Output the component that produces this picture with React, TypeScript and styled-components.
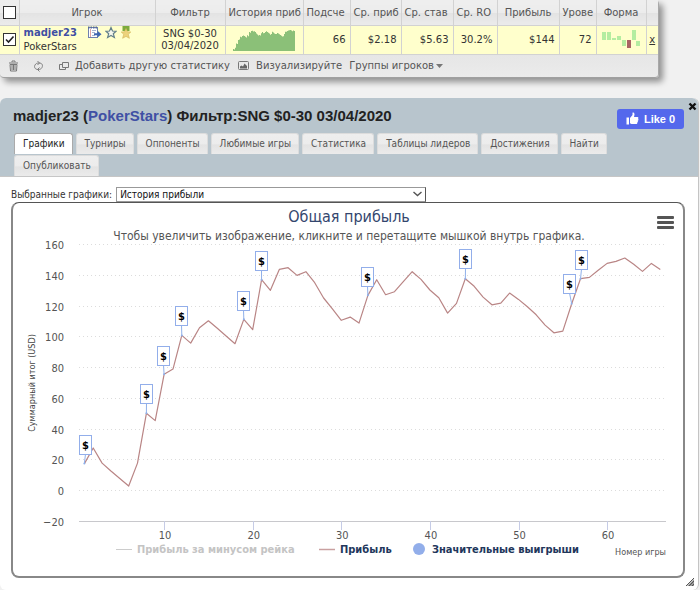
import React from "react";
import styled, { createGlobalStyle, css } from "styled-components";

const GlobalStyle = createGlobalStyle`
  * { box-sizing: border-box; }
  body {
    margin: 0;
    background: #f1f1f1;
    color: #333;
    font-family: "DejaVu Sans", Verdana, sans-serif;
    font-size: 10px;
    overflow: hidden;
  }
`;

const silver = "linear-gradient(#eeeeee 0%, #ececec 50%, #e3e3e3 54%, #ebebeb 100%)";

const Page = styled.div`
  display: flex;
  flex-direction: column;
  gap: 20px;
  min-height: 100vh;
`;

/* Results grid */

const Results = styled.section`
  margin-right: 41px;
  background: ${silver};
  border-right: 1px solid #a8a8a8;
  border-bottom: 1px solid #a0a0a0;
  border-radius: 4px;
  box-shadow: 4px 4px 6px rgba(0, 0, 0, 0.4);
`;

const Grid = styled.table`
  width: 100%;
  table-layout: fixed;
  border-collapse: collapse;
`;

const Col = styled.col<{ $w?: number }>`
  width: ${(p) => (p.$w ? `${p.$w}px` : "auto")};
`;

const HeadCell = styled.th<{ $left?: boolean }>`
  height: 25px;
  padding: 0 0 0 ${(p) => (p.$left ? 3 : 0)}px;
  white-space: nowrap;
  font-weight: normal;
  text-align: ${(p) => (p.$left ? "left" : "center")};
  color: #555;
  background: ${silver};
  border-right: 1px solid #d2d2d2;
  border-bottom: 1px solid #d2d2d2;
  &:last-child { border-right: 0; }
`;

const Cell = styled.td<{ $align?: string; $tight?: boolean }>`
  height: 29px;
  padding: 0 ${(p) => (p.$tight ? 0 : 4)}px;
  white-space: nowrap;
  line-height: 12px;
  text-align: ${(p) => p.$align || "right"};
  background: #ffffcc;
  border-right: 1px solid #d2d2d2;
  border-bottom: 1px solid #d2d2d2;
  &:last-child { border-right: 0; }
`;

const Tick = styled.input`
  appearance: none;
  display: block;
  width: 13px;
  height: 13px;
  margin: 0 auto;
  background: #fff;
  border: 1px solid #333;
`;

const TickBox = styled.label`
  display: grid;
  justify-content: center;
  & > * { grid-area: 1 / 1; }
  & svg { pointer-events: none; visibility: hidden; }
  & input:checked + svg { visibility: visible; }
`;

const PlayerRow = styled.div`
  display: flex;
  align-items: center;
  gap: 10px;
  height: 14px;
`;

const Icons = styled.span`
  display: flex;
  align-items: center;
  gap: 3px;
`;

const Site = styled.div`
  line-height: 14px;
`;

const Link = styled.a<{ $bold?: boolean }>`
  color: #3f50a4;
  text-decoration: none;
  font-weight: ${(p) => (p.$bold ? "bold" : "inherit")};
`;

const RemoveLink = styled.a`
  color: #333;
`;

const Spark = styled.svg`
  display: block;
  margin: 0 auto;
`;

const Toolbar = styled.div`
  display: flex;
  align-items: center;
  height: 22px;
  padding-left: 8px;
`;

const ToolButton = styled.button<{ $after?: number; $gap?: number }>`
  display: flex;
  align-items: center;
  gap: ${(p) => p.$gap || 6}px;
  padding: 0;
  margin-right: ${(p) => p.$after || 0}px;
  border: 0;
  background: none;
  font: inherit;
  color: #555;
  white-space: nowrap;
  cursor: pointer;
`;

/* Player dialog */

const Dialog = styled.section`
  flex: 1;
  display: flex;
  flex-direction: column;
  margin-right: 1px;
  background: #fff;
  border-right: 1px solid #c4c4c4;
  border-radius: 6px;
  position: relative;
`;

const DialogHead = styled.header`
  background: #b8c5cd;
  border-bottom: 1px solid #c6c6c6;
  border-radius: 6px 6px 0 0;
  display: grid;
  grid-template-columns: 1fr auto;
  padding: 0 1px 0 13px;
`;

const Title = styled.h1`
  margin: 0;
  color: #222;
  font: bold 15px/35px "Liberation Sans", Arial, sans-serif;
`;

const HeadActions = styled.div`
  display: flex;
  align-items: flex-start;
  gap: 4px;
`;

const LikeButton = styled.button`
  display: flex;
  align-items: center;
  justify-content: center;
  gap: 5px;
  width: 67px;
  height: 20px;
  margin-top: 11px;
  padding: 0;
  border: 0;
  border-radius: 3px;
  background: #5468ec;
  color: #fff;
  font: bold 11px "Liberation Sans", Arial, sans-serif;
  cursor: pointer;
`;

const CloseButton = styled.button`
  display: flex;
  width: 9px;
  height: 9px;
  margin-top: 4px;
  padding: 0;
  border: 0;
  background: none;
  cursor: pointer;
`;

const Tabs = styled.nav`
  grid-column: 1 / -1;
  display: flex;
  flex-wrap: wrap;
  gap: 1px 3px;
  padding: 0 40px 0 1px;
`;

const Tab = styled.button<{ $active?: boolean }>`
  height: 21px;
  padding: 0 7px 0 8px;
  border: 1px solid #dcdcdc;
  border-bottom: 0;
  border-radius: 3px 3px 0 0;
  background: ${silver};
  color: #555;
  font: 10px "DejaVu Sans Condensed", "DejaVu Sans", Tahoma, sans-serif;
  cursor: pointer;
  ${(p) =>
    p.$active &&
    css`
      background: #fff;
      border-color: #aaa;
      color: #222;
    `}
`;

const Body = styled.div`
  padding: 10px 13px 11px 11px;
`;

const Picker = styled.div`
  display: flex;
  align-items: center;
  gap: 4px;
  height: 15px;
  font-family: "DejaVu Sans Condensed", "DejaVu Sans", Tahoma, sans-serif;
`;

const SelectWrap = styled.span`
  display: grid;
  width: 46%;
  align-items: center;
  & > * { grid-area: 1 / 1; }
  & svg { justify-self: end; margin-right: 4px; pointer-events: none; }
`;

const Select = styled.select`
  appearance: none;
  width: 100%;
  height: 15px;
  padding: 0 3px;
  border: 1px solid #999;
  border-right-color: #555;
  border-radius: 0;
  background: #fff;
  color: #111;
  font: inherit;
`;

const ChartPanel = styled.div`
  border: 1px solid #555;
  border-width: 1px 2px 2px;
  border-color: #555 #888 #888;
  border-radius: 8px;
  background: #fff;
`;

const ChartSvg = styled.svg`
  display: block;
  width: 100%;
  height: auto;
  font-family: "DejaVu Sans Condensed", "DejaVu Sans", "Lucida Grande", sans-serif;
`;

const Grip = styled.svg`
  position: absolute;
  right: 4px;
  bottom: 4px;
`;

/* Chart data: running profit in USD after each game */

const profit = [
  17.3, 27.4, 17.6, 12.5, 7.6, 2.7, 17.6, 50, 45.2, 75.3, 78.7, 100.6, 95.6, 105.6, 110.1, 105.2, 100.2, 95.2, 111,
  104.3, 136.8, 129.9, 143.5, 144.6, 139.6, 142, 134.8, 124.9, 117.9, 110.4, 112.5, 108.6, 126.6, 136.8, 127, 129,
  135.5, 142, 137, 130.1, 125.1, 115.1, 121.4, 137.4, 132.5, 125.5, 120.5, 121.6, 128.1, 124, 119.2, 114, 107.3,
  102.3, 103.4, 121.2, 137.4, 138.3, 142.9, 147.4, 148.7, 150.9, 146.8, 142.2, 147.4, 143.5,
];

const wins = [
  { game: 1, left: 66, top: 232 },
  { game: 8, left: 127, top: 181 },
  { game: 10, left: 144, top: 143 },
  { game: 12, left: 162, top: 103 },
  { game: 19, left: 224, top: 88 },
  { game: 21, left: 242, top: 48 },
  { game: 33, left: 348, top: 64 },
  { game: 44, left: 446, top: 46 },
  { game: 56, left: 550, top: 71 },
  { game: 57, left: 562, top: 47 },
];

const gx = (game: number) => 62.5 + game * 8.86;
const gy = (usd: number) => 287.2 - usd * 1.539;

function ProfitChart() {
  const line = profit.map((v, i) => `${gx(i + 1).toFixed(1)},${gy(v).toFixed(1)}`).join(" ");
  const ticks = [160, 140, 120, 100, 80, 60, 40, 20, 0, -20];
  return (
    <ChartSvg viewBox="0 0 670 373" role="img" aria-label="Общая прибыль">
      <text x="336" y="19" textAnchor="middle" fontSize="16" fill="#33466e">Общая прибыль</text>
      <text x="336" y="37" textAnchor="middle" fontSize="12" fill="#555">
        Чтобы увеличить изображение, кликните и перетащите мышкой внутрь графика.
      </text>
      {[13, 18, 23].map((y) => (
        <rect key={y} x="644" y={y} width="17" height="3" rx="1" fill="#555" />
      ))}
      {ticks.map((t) => {
        const y = Math.round(gy(t)) + 0.5;
        const base = t === -20;
        return (
          <g key={t}>
            <text x="51" y={y + 4} textAnchor="end" fontSize="11" fill="#555">{t < 0 ? `−${-t}` : t}</text>
            <line x1="66" x2="653" y1={y} y2={y} stroke={base ? "#c8c8cc" : "#dcdcdc"} strokeDasharray={base ? undefined : "1 3"} />
          </g>
        );
      })}
      {[10, 20, 30, 40, 50, 60].map((g) => (
        <g key={g}>
          <line x1={Math.round(gx(g)) + 0.5} x2={Math.round(gx(g)) + 0.5} y1="318" y2="327" stroke="#c6cce6" />
          <text x={gx(g) + 1} y="336" textAnchor="middle" fontSize="11" fill="#555">{g}</text>
        </g>
      ))}
      <text transform="translate(22 180) rotate(-90)" textAnchor="middle" fontSize="9" fill="#444">Суммарный итог (USD)</text>
      <polyline points={line} fill="none" stroke="#b98585" strokeWidth="1.2" strokeLinejoin="round" />
      {wins.map((w) => (
        <g key={w.game}>
          <line x1={w.left + 6.5} y1={w.top + 19} x2={gx(w.game)} y2={gy(profit[w.game - 1])} stroke="#8fb0ea" />
          <circle cx={gx(w.game)} cy={gy(profit[w.game - 1])} r="1" fill="#8fb0ea" />
          <rect x={w.left + 0.5} y={w.top + 0.5} width="12" height="19" fill="#fff" stroke="#92aeea" />
          <text x={w.left + 6.5} y={w.top + 14} textAnchor="middle" fontSize="11" fontWeight="bold" fill="#000">$</text>
        </g>
      ))}
      <g fontSize="11" fontWeight="bold">
        <line x1="103" x2="119" y1="346.5" y2="346.5" stroke="#ccc" />
        <text x="124" y="350" fill="#c4c4c4">Прибыль за минусом рейка</text>
        <line x1="306" x2="322" y1="346.5" y2="346.5" stroke="#c9a0a0" strokeWidth="1.5" />
        <text x="327" y="350" fill="#22375c">Прибыль</text>
        <circle cx="406" cy="346" r="6" fill="#92aeea" />
        <text x="419" y="350" fill="#22375c">Значительные выигрыши</text>
      </g>
      <text x="653" y="352" textAnchor="end" fontSize="9" fill="#555">Номер игры</text>
    </ChartSvg>
  );
}

const steps = profit.slice(4).map((v, i) => `L${i},${(22 - (v * 20) / 151).toFixed(1)}H${i + 1}`).join("");

function HistorySpark() {
  return (
    <Spark width="62" height="23" aria-label="История прибыли">
      <path d={`M0,23V19${steps}V23Z`} fill="#8bc078" />
    </Spark>
  );
}

const form = [
  [0, 2, 8], [5, 2, 8], [10, 8, 2], [15, 6, 4], [20, 10, 6], [25, 10, 8], [30, 0, 10], [34, 11, 5],
];

function FormSpark() {
  return (
    <Spark width="38" height="19" aria-label="Форма">
      {form.map(([x, y, h]) => (
        <rect key={x} x={x} y={y} width="4" height={h} fill={x === 25 ? "#a86464" : "#b4eda0"} />
      ))}
    </Spark>
  );
}

const columns: [string, boolean?][] = [
  ["Игрок"], ["Фильтр"], ["История приб", true], ["Подсче", true], ["Ср. приб", true], ["Ср. став", true],
  ["Ср. RO", true], ["Прибыль"], ["Урове", true], ["Форма"], [""],
];

const tabs = [
  "Графики", "Турниры", "Оппоненты", "Любимые игры", "Статистика", "Таблицы лидеров", "Достижения", "Найти",
  "Опубликовать",
];

export default function App() {
  return (
    <>
      <GlobalStyle />
      <Page>
        <Results>
          <Grid>
            <colgroup>
              <Col $w={19} /><Col /><Col $w={70} /><Col $w={78} /><Col $w={47} /><Col $w={51} />
              <Col $w={52} /><Col $w={44} /><Col $w={62} /><Col $w={37} /><Col $w={50} /><Col $w={12} />
            </colgroup>
            <thead>
              <tr>
                <HeadCell><Tick type="checkbox" aria-label="Выбрать все" /></HeadCell>
                {columns.map(([name, left]) => (
                  <HeadCell key={name} $left={left}>{name}</HeadCell>
                ))}
              </tr>
            </thead>
            <tbody>
              <tr>
                <Cell $tight>
                  <TickBox>
                    <Tick type="checkbox" defaultChecked aria-label="madjer23" />
                    <svg width="13" height="13"><path d="M3 6.5 5.5 9 10.5 3.5" fill="none" stroke="#222" strokeWidth="1.6" /></svg>
                  </TickBox>
                </Cell>
                <Cell $align="left">
                  <PlayerRow>
                    <Link href="#player" $bold>madjer23</Link>
                    <Icons>
                      <svg width="15" height="13">
                        <rect x="1.5" y="1.5" width="9" height="10" fill="#fff" stroke="#7081ae" />
                        <path d="M1 1.5H11" stroke="#566a9b" strokeWidth="2" strokeDasharray="1.5 1" />
                        <path d="M3.5 3V11" stroke="#e2a3a3" />
                        <path d="M5 4.5H9M5 6.5H8M5 9.5H8" stroke="#a9b4d1" />
                        <path d="M7 7.2H10.5V4.8L14.5 8.2 10.5 11.6V9.3H7Z" fill="#3f65b0" />
                      </svg>
                      <svg width="12" height="13">
                        <path d="M6 1.5 7.5 5 11 5.3 8.3 7.7 9.4 11.5 6 9.5 2.6 11.5 3.7 7.7 1 5.3 4.5 5Z" fill="#f6f8ee" stroke="#63808a" strokeWidth="1.2" />
                      </svg>
                      <svg width="12" height="13">
                        <path d="M2.5 0H9.5V5H2.5Z" fill="#7dab3c" />
                        <path d="M6 2.5 7.5 5.8 10.8 6 8.3 8.3 9.4 12.3 6 10.4 2.6 12.3 3.7 8.3 1.2 6 4.5 5.8Z" fill="#ecd27c" stroke="#d3b458" strokeWidth=".6" />
                      </svg>
                    </Icons>
                  </PlayerRow>
                  <Site>PokerStars</Site>
                </Cell>
                <Cell $align="center">SNG $0-30<br />03/04/2020</Cell>
                <Cell $align="center"><HistorySpark /></Cell>
                <Cell>66</Cell>
                <Cell>$2.18</Cell>
                <Cell>$5.63</Cell>
                <Cell>30.2%</Cell>
                <Cell>$144</Cell>
                <Cell>72</Cell>
                <Cell><FormSpark /></Cell>
                <Cell $align="center" $tight><RemoveLink href="#remove">x</RemoveLink></Cell>
              </tr>
            </tbody>
          </Grid>
          <Toolbar>
            <ToolButton $after={14} aria-label="Удалить">
              <svg width="11" height="12"><path d="M1 3H10M4 2V1H7V2M2 4.5H9L8.5 11H2.5Z" fill="none" stroke="#777" /><path d="M4 5V10M5.5 5V10M7 5V10" stroke="#777" /></svg>
            </ToolButton>
            <ToolButton $after={15} aria-label="Обновить">
              <svg width="11" height="12" fill="none" stroke="#808080"><path d="M5 9.5C2 9.5 .8 7 2 5 2.8 3.5 4 3 6 3M4.5 1 6.5 3 4.5 5M6 3C9 3 10.2 5 9 7.5 8.2 9 7 9.5 5 9.5M6.5 7.5 4.5 9.5 6.5 11.5" /></svg>
            </ToolButton>
            <ToolButton $after={8}>
              <svg width="10" height="10" fill="none" stroke="#777"><path d="M3.5 1.5H9.5V6.5H3.5ZM3 3.5H.5V8.5H6.5V7" /></svg>
              Добавить другую статистику
            </ToolButton>
            <ToolButton $after={7}>
              <svg width="12" height="10"><rect x=".5" y=".5" width="10" height="8" rx="1" fill="none" stroke="#777" /><path d="M2 7.5V5.5L3.5 4.5 5 5.5 6.5 2.5 9 5V7.5Z" fill="#666" /></svg>
              Визуализируйте
            </ToolButton>
            <ToolButton $gap={2}>
              Группы игроков
              <svg width="8" height="6"><path d="M0 1H7L3.5 5Z" fill="#777" /></svg>
            </ToolButton>
          </Toolbar>
        </Results>

        <Dialog>
          <DialogHead>
            <Title>madjer23 (<Link href="#network">PokerStars</Link>) Фильтр:SNG $0-30 03/04/2020</Title>
            <HeadActions>
              <LikeButton>
                <svg width="13" height="13" fill="#fff"><path d="M.5 5.5H3V12.5H.5ZM4 6 6.5 3V1C6.5 .2 8.5 .3 8.5 2.5L8 5H11.5C12.6 5 12.6 6.5 12 6.8 12.8 7.4 12.5 8.6 11.7 8.8 12.2 9.5 11.8 10.5 11.2 10.7 11.5 11.5 10.9 12 10 12H5.5L4 11.3Z" /></svg>
                Like 0
              </LikeButton>
              <CloseButton aria-label="Закрыть">
                <svg width="9" height="9"><path d="M1.5 1.5 7.5 7.5M7.5 1.5 1.5 7.5" stroke="#111" strokeWidth="2.4" /></svg>
              </CloseButton>
            </HeadActions>
            <Tabs>
              {tabs.map((name, i) => (
                <Tab key={name} $active={i === 0}>{name}</Tab>
              ))}
            </Tabs>
          </DialogHead>
          <Body>
            <Picker>
              <label htmlFor="graph">Выбранные графики:</label>
              <SelectWrap>
                <Select id="graph"><option>История прибыли</option></Select>
                <svg width="9" height="6"><path d="M.5 1 4.5 4.5 8.5 1" fill="none" stroke="#555" strokeWidth="1.4" /></svg>
              </SelectWrap>
            </Picker>
            <ChartPanel><ProfitChart /></ChartPanel>
          </Body>
          <Grip width="8" height="8"><path d="M1 8 8 1V8Z" fill="#999" /><path d="M0 8 8 0M3 8 8 3M6 8 8 6" stroke="#555" /></Grip>
        </Dialog>
      </Page>
    </>
  );
}
